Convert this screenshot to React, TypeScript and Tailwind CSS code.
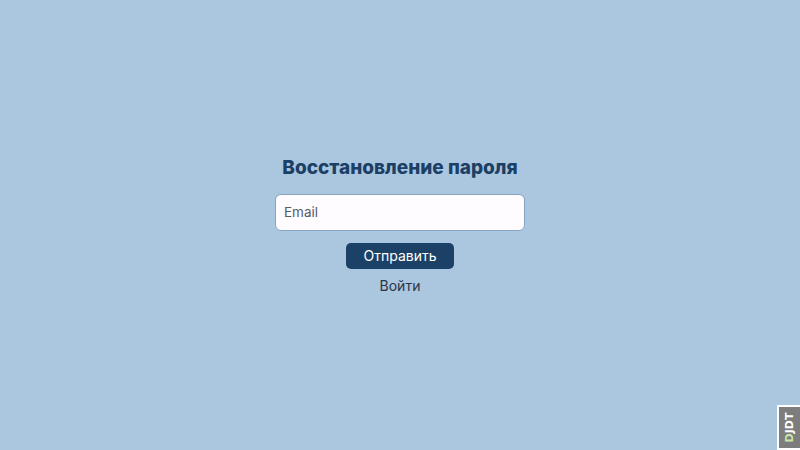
import React from "react";

export default function App() {
  return (
    <div className="relative w-full h-screen bg-[#abc6df] flex items-center justify-center font-['Inter','Noto_Sans',sans-serif] overflow-hidden">
      {/* Password recovery form */}
      <form className="flex flex-col items-center w-[250px]" onSubmit={(e) => e.preventDefault()}>
        <h1 className="text-[19px] font-extrabold text-[#1c3f66] tracking-[0px] leading-none mb-[17px] whitespace-nowrap">
          Восстановление пароля
        </h1>
        <input
          type="email"
          placeholder="Email"
          className="w-full h-[37px] rounded-[6px] bg-[#fefcfe] border border-[#8aa4c2] px-[8px] text-[13.5px] text-[#333] placeholder:text-[#555b63] outline-none"
        />
        <button
          type="submit"
          className="mt-[12px] w-[108px] h-[26px] rounded-[5px] bg-[#1b4167] text-white text-[14px] leading-none"
        >
          Отправить
        </button>
        <a href="#" className="mt-[10px] text-[14px] text-[#2a3544] leading-none">
          Войти
        </a>
      </form>

      {/* Debug toolbar handle */}
      <div className="absolute right-0 top-[405px] w-[23px] h-[45px] bg-[#7d7d7d] border-2 border-r-0 border-white flex items-center justify-center">
        <span className="-rotate-90 text-[11px] font-bold text-white font-['DejaVu_Sans',sans-serif] leading-none whitespace-nowrap">
          <span className="text-[#c8e6a8]">D</span>JDT
        </span>
      </div>
    </div>
  );
}
